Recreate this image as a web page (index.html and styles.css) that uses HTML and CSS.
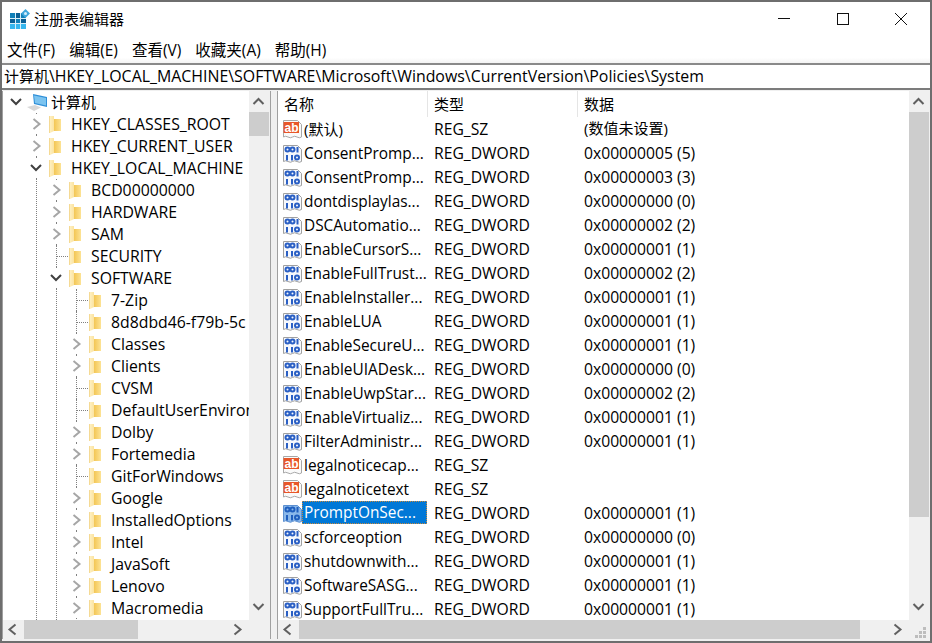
FILE: index.html
```html
<!DOCTYPE html>
<html>
	<head>
		<meta charset="UTF-8">
		<title>注册表编辑器</title>
		<link rel="stylesheet" href="styles.css">
	</head>
	<body>
		<svg class="defs" width="0" height="0">
			<defs>
				<linearGradient id="fld-back" x1="0" y1="0" x2="1" y2="0">
					<stop offset="0" stop-color="#f3c655"/>
					<stop offset="1" stop-color="#fde395"/>
				</linearGradient>
				<linearGradient id="fld-front" x1="0" y1="0" x2="1" y2="0">
					<stop offset="0" stop-color="#f0cf80"/>
					<stop offset=".3" stop-color="#feeebc"/>
					<stop offset="1" stop-color="#fbe3a0"/>
				</linearGradient>
			</defs>
			<symbol id="folder" viewBox="0 0 13 17">
				<path d="M5 3h7v12H5z" fill="url(#fld-back)"/>
				<path d="M0 0h5v15l-4 2H0z" fill="url(#fld-front)"/>
			</symbol>
			<symbol id="chev-r" viewBox="0 0 13 20"><path d="M3.500 5l6 5-6 5" fill="none" stroke="#a6a6a6" stroke-width="2"/></symbol>
			<symbol id="chev-d" viewBox="0 0 13 20"><path d="M1 7l5 5 5-5" fill="none" stroke="#404040" stroke-width="2"/></symbol>
			<symbol id="ico-sz" viewBox="0 0 20 20">
				<path d="M1.500 1.500h14l4 4v12.500q-2 1.500-4.500 0t-4.500 0-4.500 0-4.500 0z" fill="#fafafa" stroke="#a8a8a8"/>
				<rect x="1.500" y="3" width="15.500" height="11" fill="#e8572a"/>
				<text x="9.500" y="12.500" class="ab">ab</text>
			</symbol>
			<symbol id="ico-bin" viewBox="0 0 20 20">
				<path d="M1.500 2.500h14l4 4v12q-2 1.500-4.500 0t-4.500 0-4.500 0-4.500 0z" fill="#f6f8fc" stroke="#a0a0a0"/>
				<g fill="none" stroke="#2a5fc4" stroke-width="2">
					<circle cx="5.500" cy="6.500" r="2"/><circle cx="10.500" cy="6.500" r="2"/>
					<path d="M15.500 4v5.500M5 12v5.500M10 12v5.500"/><circle cx="15" cy="14.500" r="2"/>
				</g>
			</symbol>
			<symbol id="ico-bin-sel" viewBox="0 0 20 20">
				<path d="M1.500 2.500h14l4 4v12q-2 1.500-4.500 0t-4.500 0-4.500 0-4.500 0z" fill="#8ab8ea" stroke="#5d90d0"/>
				<g fill="none" stroke="#1f5fbe" stroke-width="2">
					<circle cx="5.500" cy="6.500" r="2"/><circle cx="10.500" cy="6.500" r="2"/>
					<path d="M15.500 4v5.500M5 12v5.500M10 12v5.500"/><circle cx="15" cy="14.500" r="2"/>
				</g>
			</symbol>
		</svg>

		<div class="window">
			<div class="titlebar">
				<svg class="app-icon" width="20" height="20" viewBox="0 0 20 20">
					<rect x="0" y="4" width="16" height="16" fill="#0f7fb8"/>
					<path d="M5.500 4h5v5h-5zM0 9.500h5.500v5H0zM10.500 9.500H16v5h-5.500z" fill="#0a5f94"/>
					<path d="M0 14.500h16V20H0z" fill="#35b6ee"/>
					<path d="M5.500 4v16M10.500 4v16M0 9.500h16M0 14.500h16" stroke="#d8eff9" stroke-width="1"/>
					<path d="M15.500 0l4.500 4.500-4.500 4.500-4.500-4.500z" fill="#3fa7dc"/>
					<circle cx="15.500" cy="4.500" r="1.500" fill="#d5eefa"/>
				</svg>
				<span class="title">注册表编辑器</span>
				<div class="win-btns">
					<svg width="12" height="12" viewBox="0 0 12 12"><path d="M0 5.500h12" stroke="#111"/></svg>
					<svg class="win-max" width="12" height="12" viewBox="0 0 12 12"><rect x=".5" y=".5" width="11" height="11" fill="none" stroke="#111"/></svg>
					<svg class="win-close" width="12" height="12" viewBox="0 0 12 12"><path d="M0 0l12 12M12 0L0 12" stroke="#111"/></svg>
				</div>
			</div>

			<div class="menubar">
				<span>文件(F)</span><span>编辑(E)</span><span>查看(V)</span><span>收藏夹(A)</span><span>帮助(H)</span>
			</div>

			<div class="address"><span class="cjk">计算机</span>\HKEY_LOCAL_MACHINE\SOFTWARE\Microsoft\Windows\CurrentVersion\Policies\System</div>

			<div class="panes">
				<div class="tree-pane">
					<div class="pane-body">
						<div class="tree">
							<i class="guide guide-1"></i>
							<i class="guide guide-2"></i>
							<div class="node computer">
								<svg class="exp"><use href="#chev-d"/></svg>
								<svg class="pc-icon" width="20" height="20" viewBox="0 0 20 20">
									<path d="M6 2l14 3v10L7 12z" fill="#2f8fd8"/>
									<path d="M7 3.500l12 2.500v7.500L8 11z" fill="#7cc4f0"/>
									<path d="M0 15l8-2 6 2.500-7 3.500z" fill="#d8d8d8"/>
								</svg>
								<span class="cjk">计算机</span>
							</div>
							<div class="node l1"><svg class="exp"><use href="#chev-r"/></svg><svg class="fld"><use href="#folder"/></svg><span>HKEY_CLASSES_ROOT</span></div>
							<div class="node l1"><svg class="exp"><use href="#chev-r"/></svg><svg class="fld"><use href="#folder"/></svg><span>HKEY_CURRENT_USER</span></div>
							<div class="node l1"><svg class="exp"><use href="#chev-d"/></svg><svg class="fld"><use href="#folder"/></svg><span>HKEY_LOCAL_MACHINE</span></div>
							<div class="node l2"><svg class="exp"><use href="#chev-r"/></svg><svg class="fld"><use href="#folder"/></svg><span>BCD00000000</span></div>
							<div class="node l2"><svg class="exp"><use href="#chev-r"/></svg><svg class="fld"><use href="#folder"/></svg><span>HARDWARE</span></div>
							<div class="node l2"><svg class="exp"><use href="#chev-r"/></svg><svg class="fld"><use href="#folder"/></svg><span>SAM</span></div>
							<div class="node l2"><i class="exp leaf"></i><svg class="fld"><use href="#folder"/></svg><span>SECURITY</span></div>
							<div class="node l2"><svg class="exp"><use href="#chev-d"/></svg><svg class="fld"><use href="#folder"/></svg><span>SOFTWARE</span></div>
							<div class="node l3"><i class="exp leaf"></i><svg class="fld"><use href="#folder"/></svg><span>7-Zip</span></div>
							<div class="node l3"><i class="exp leaf"></i><svg class="fld"><use href="#folder"/></svg><span>8d8dbd46-f79b-5c</span></div>
							<div class="node l3"><svg class="exp"><use href="#chev-r"/></svg><svg class="fld"><use href="#folder"/></svg><span>Classes</span></div>
							<div class="node l3"><svg class="exp"><use href="#chev-r"/></svg><svg class="fld"><use href="#folder"/></svg><span>Clients</span></div>
							<div class="node l3"><i class="exp leaf"></i><svg class="fld"><use href="#folder"/></svg><span>CVSM</span></div>
							<div class="node l3"><i class="exp leaf"></i><svg class="fld"><use href="#folder"/></svg><span>DefaultUserEnviron</span></div>
							<div class="node l3"><svg class="exp"><use href="#chev-r"/></svg><svg class="fld"><use href="#folder"/></svg><span>Dolby</span></div>
							<div class="node l3"><svg class="exp"><use href="#chev-r"/></svg><svg class="fld"><use href="#folder"/></svg><span>Fortemedia</span></div>
							<div class="node l3"><i class="exp leaf"></i><svg class="fld"><use href="#folder"/></svg><span>GitForWindows</span></div>
							<div class="node l3"><svg class="exp"><use href="#chev-r"/></svg><svg class="fld"><use href="#folder"/></svg><span>Google</span></div>
							<div class="node l3"><svg class="exp"><use href="#chev-r"/></svg><svg class="fld"><use href="#folder"/></svg><span>InstalledOptions</span></div>
							<div class="node l3"><svg class="exp"><use href="#chev-r"/></svg><svg class="fld"><use href="#folder"/></svg><span>Intel</span></div>
							<div class="node l3"><svg class="exp"><use href="#chev-r"/></svg><svg class="fld"><use href="#folder"/></svg><span>JavaSoft</span></div>
							<div class="node l3"><svg class="exp"><use href="#chev-r"/></svg><svg class="fld"><use href="#folder"/></svg><span>Lenovo</span></div>
							<div class="node l3"><svg class="exp"><use href="#chev-r"/></svg><svg class="fld"><use href="#folder"/></svg><span>Macromedia</span></div>
						</div>
						<div class="vbar">
							<svg class="arrow-v" viewBox="0 0 20 21"><path d="M4.500 13l5-5 5 5" fill="none" stroke="#606060" stroke-width="2"/></svg>
							<div class="thumb tree-vthumb"></div>
							<div class="track"></div>
							<svg class="arrow-v" viewBox="0 0 20 21"><path d="M4.500 5l5 5 5-5" fill="none" stroke="#606060" stroke-width="2"/></svg>
						</div>
					</div>
					<div class="hbar">
						<svg class="arrow-h" viewBox="0 0 21 19"><path d="M12.500 4.500l-6 5 6 5" fill="none" stroke="#606060" stroke-width="2"/></svg>
						<div class="thumb tree-hthumb"></div>
						<div class="track"></div>
						<svg class="arrow-h" viewBox="0 0 21 19"><path d="M6.500 4.500l6 5-6 5" fill="none" stroke="#606060" stroke-width="2"/></svg>
						<div class="corner"></div>
					</div>
				</div>

				<div class="list-pane">
					<div class="pane-body">
						<div class="list">
							<div class="head"><span class="h-name">名称</span><span class="h-type">类型</span><span class="h-data">数据</span></div>
							<div class="row"><svg class="ico"><use href="#ico-sz"/></svg><span class="c-name cjk">(默认)</span><span class="c-type">REG_SZ</span><span class="c-data cjk">(数值未设置)</span></div>
							<div class="row"><svg class="ico"><use href="#ico-bin"/></svg><span class="c-name">ConsentPromp...</span><span class="c-type">REG_DWORD</span><span class="c-data">0x00000005 (5)</span></div>
							<div class="row"><svg class="ico"><use href="#ico-bin"/></svg><span class="c-name">ConsentPromp...</span><span class="c-type">REG_DWORD</span><span class="c-data">0x00000003 (3)</span></div>
							<div class="row"><svg class="ico"><use href="#ico-bin"/></svg><span class="c-name">dontdisplaylas...</span><span class="c-type">REG_DWORD</span><span class="c-data">0x00000000 (0)</span></div>
							<div class="row"><svg class="ico"><use href="#ico-bin"/></svg><span class="c-name">DSCAutomatio...</span><span class="c-type">REG_DWORD</span><span class="c-data">0x00000002 (2)</span></div>
							<div class="row"><svg class="ico"><use href="#ico-bin"/></svg><span class="c-name">EnableCursorS...</span><span class="c-type">REG_DWORD</span><span class="c-data">0x00000001 (1)</span></div>
							<div class="row"><svg class="ico"><use href="#ico-bin"/></svg><span class="c-name">EnableFullTrust...</span><span class="c-type">REG_DWORD</span><span class="c-data">0x00000002 (2)</span></div>
							<div class="row"><svg class="ico"><use href="#ico-bin"/></svg><span class="c-name">EnableInstaller...</span><span class="c-type">REG_DWORD</span><span class="c-data">0x00000001 (1)</span></div>
							<div class="row"><svg class="ico"><use href="#ico-bin"/></svg><span class="c-name">EnableLUA</span><span class="c-type">REG_DWORD</span><span class="c-data">0x00000001 (1)</span></div>
							<div class="row"><svg class="ico"><use href="#ico-bin"/></svg><span class="c-name">EnableSecureU...</span><span class="c-type">REG_DWORD</span><span class="c-data">0x00000001 (1)</span></div>
							<div class="row"><svg class="ico"><use href="#ico-bin"/></svg><span class="c-name">EnableUIADesk...</span><span class="c-type">REG_DWORD</span><span class="c-data">0x00000000 (0)</span></div>
							<div class="row"><svg class="ico"><use href="#ico-bin"/></svg><span class="c-name">EnableUwpStar...</span><span class="c-type">REG_DWORD</span><span class="c-data">0x00000002 (2)</span></div>
							<div class="row"><svg class="ico"><use href="#ico-bin"/></svg><span class="c-name">EnableVirtualiz...</span><span class="c-type">REG_DWORD</span><span class="c-data">0x00000001 (1)</span></div>
							<div class="row"><svg class="ico"><use href="#ico-bin"/></svg><span class="c-name">FilterAdministr...</span><span class="c-type">REG_DWORD</span><span class="c-data">0x00000001 (1)</span></div>
							<div class="row"><svg class="ico"><use href="#ico-sz"/></svg><span class="c-name">legalnoticecap...</span><span class="c-type">REG_SZ</span><span class="c-data"></span></div>
							<div class="row"><svg class="ico"><use href="#ico-sz"/></svg><span class="c-name">legalnoticetext</span><span class="c-type">REG_SZ</span><span class="c-data"></span></div>
							<div class="row selected"><svg class="ico"><use href="#ico-bin-sel"/></svg><span class="c-name">PromptOnSec...</span><span class="c-type">REG_DWORD</span><span class="c-data">0x00000001 (1)</span></div>
							<div class="row"><svg class="ico"><use href="#ico-bin"/></svg><span class="c-name">scforceoption</span><span class="c-type">REG_DWORD</span><span class="c-data">0x00000000 (0)</span></div>
							<div class="row"><svg class="ico"><use href="#ico-bin"/></svg><span class="c-name">shutdownwith...</span><span class="c-type">REG_DWORD</span><span class="c-data">0x00000001 (1)</span></div>
							<div class="row"><svg class="ico"><use href="#ico-bin"/></svg><span class="c-name">SoftwareSASG...</span><span class="c-type">REG_DWORD</span><span class="c-data">0x00000001 (1)</span></div>
							<div class="row"><svg class="ico"><use href="#ico-bin"/></svg><span class="c-name">SupportFullTru...</span><span class="c-type">REG_DWORD</span><span class="c-data">0x00000001 (1)</span></div>
						</div>
						<div class="vbar">
							<svg class="arrow-v" viewBox="0 0 20 21"><path d="M4.500 13l5-5 5 5" fill="none" stroke="#606060" stroke-width="2"/></svg>
							<div class="thumb list-vthumb"></div>
							<div class="track"></div>
							<svg class="arrow-v" viewBox="0 0 20 21"><path d="M4.500 5l5 5 5-5" fill="none" stroke="#606060" stroke-width="2"/></svg>
						</div>
					</div>
					<div class="hbar">
						<svg class="arrow-h" viewBox="0 0 21 19"><path d="M12.500 4.500l-6 5 6 5" fill="none" stroke="#606060" stroke-width="2"/></svg>
						<div class="thumb list-hthumb"></div>
						<div class="track"></div>
						<svg class="arrow-h" viewBox="0 0 21 19"><path d="M6.500 4.500l6 5-6 5" fill="none" stroke="#606060" stroke-width="2"/></svg>
						<svg class="corner" viewBox="0 0 21 19"><path d="M14 7h3v3h-3zM10 11h3v3h-3zM14 11h3v3h-3zM6 15h3v3H6zM10 15h3v3h-3zM14 15h3v3h-3z" fill="#bdbdbd"/></svg>
					</div>
				</div>
			</div>
		</div>
	</body>
</html>
```

FILE: styles.css
```css
* {
	margin: 0;
	padding: 0;
	box-sizing: border-box;
}

html, body {
	width: 932px;
	height: 643px;
	overflow: hidden;
}

body {
	font-family: "Open Sans", "Noto Sans CJK SC", sans-serif;
	font-size: 15.8px;
	color: #000;
	background: #fff;
}

.defs {
	position: absolute;
}

.cjk {
	font-size: 15px;
}

.ab {
	font-family: "Liberation Sans", sans-serif;
	font-size: 12px;
	font-weight: bold;
	fill: #fff;
	text-anchor: middle;
}

.window {
	width: 932px;
	height: 643px;
	border: 2px solid #6e6e6e;
	display: flex;
	flex-direction: column;
	background: #f0f0f0;
}

.titlebar {
	height: 34px;
	flex: none;
	background: #fff;
	display: flex;
	align-items: center;
	padding-left: 8px;
}

.app-icon {
	margin-right: 4px;
}

.title {
	font-size: 15px;
	flex: 1;
	margin-bottom: 2px;
}

.win-btns {
	display: flex;
	align-items: center;
	padding-right: 23px;
}

.win-max {
	margin-left: 47px;
}

.win-close {
	margin-left: 46px;
}

.menubar {
	height: 27px;
	flex: none;
	background: linear-gradient(#fff 0, #fff 80%, #f4f4f4 100%);
	display: flex;
	gap: 14px;
	align-items: center;
	padding-left: 5px;
	font-size: 15.5px;
}

.address {
	height: 27px;
	flex: none;
	background: #fff;
	border-top: 2px solid #8a8a8a;
	border-bottom: 2px solid #7c7c7c;
	line-height: 23px;
	padding-left: 2px;
	white-space: nowrap;
	overflow: hidden;
	font-size: 15.9px;
}

.panes {
	flex: 1;
	min-height: 0;
	display: flex;
	gap: 6px;
	padding: 1px 0 2px;
	background: #f0f0f0;
}

.tree-pane {
	width: 269px;
	flex: none;
	display: flex;
	flex-direction: column;
	border-left: 1px solid #a0a0a0;
	border-right: 1px solid #a0a0a0;
}

.list-pane {
	flex: 1;
	min-width: 0;
	display: flex;
	flex-direction: column;
	border-left: 1px solid #a0a0a0;
}

.pane-body {
	flex: 1;
	min-height: 0;
	display: flex;
}

.tree, .list {
	flex: 1;
	min-width: 0;
	background: #fff;
	overflow: hidden;
	position: relative;
}

.node {
	height: 22px;
	display: flex;
	align-items: center;
	white-space: nowrap;
	position: relative;
}

.exp {
	width: 13px;
	height: 20px;
	flex: none;
	margin-right: 6px;
	position: relative;
	z-index: 1;
}

svg.exp {
	background: #fff;
}

.fld {
	width: 13px;
	height: 17px;
	flex: none;
	margin-right: 9px;
}

.computer {
	padding-left: 7px;
}

.computer .exp {
	margin-right: 4px;
}

.computer .cjk {
	margin-bottom: 2px;
}

.pc-icon {
	flex: none;
	margin-right: 4px;
}

.l1 {
	padding-left: 27px;
}

.l2 {
	padding-left: 47px;
}

.l3 {
	padding-left: 67px;
}

/* 树的虚线 */
.guide {
	position: absolute;
	bottom: 0;
	border-left: 1px dotted #808080;
}

.guide-1 {
	left: 33px;
	top: 84px;
}

.guide-2 {
	left: 53px;
	top: 197px;
}

.node::before {
	content: "";
	position: absolute;
	top: 0;
	bottom: 0;
	border-left: 1px dotted #808080;
}

.computer::before {
	display: none;
}

.l1::before {
	left: 33px;
}

.l2::before {
	left: 53px;
}

.l3::before {
	left: 73px;
}

.leaf::after {
	content: "";
	position: absolute;
	left: 7px;
	top: 10px;
	width: 11px;
	border-top: 1px dotted #808080;
}

.vbar {
	width: 21px;
	flex: none;
	display: flex;
	flex-direction: column;
	background: #f0f0f0;
}

.hbar {
	height: 19px;
	flex: none;
	display: flex;
	background: #f0f0f0;
}

.arrow-v {
	width: 20px;
	height: 21px;
	flex: none;
}

.arrow-h {
	width: 21px;
	height: 19px;
	flex: none;
}

.corner {
	width: 21px;
	height: 19px;
	flex: none;
}

.thumb {
	background: #cdcdcd;
	flex: none;
}

.track {
	flex: 1;
}

.vbar .thumb {
	width: 20px;
}

.tree-vthumb {
	height: 24px;
}

.tree-hthumb {
	width: 114px;
}

.list-vthumb {
	height: 405px;
}

.list-hthumb {
	width: 561px;
}

.head {
	height: 26px;
	display: flex;
	font-size: 15px;
	line-height: 26px;
}

.h-name {
	width: 149px;
	padding-left: 6px;
}

.h-type {
	width: 150px;
	padding-left: 6px;
	border-left: 1px solid #e5e5e5;
}

.h-data {
	flex: 1;
	padding-left: 6px;
	border-left: 1px solid #e5e5e5;
}

.row {
	height: 24px;
	display: flex;
	align-items: center;
	padding-left: 4px;
	white-space: nowrap;
	font-size: 15.7px;
}

.ico {
	width: 20px;
	height: 20px;
	flex: none;
}

.c-name {
	width: 125px;
	flex: none;
	padding-left: 2px;
	overflow: hidden;
	font-size: 15.4px;
}

.c-name.cjk {
	font-size: 15px;
	margin-bottom: 2px;
}

.c-data.cjk {
	font-size: 15px;
	margin-bottom: 3px;
}

.c-type {
	width: 150px;
	flex: none;
	padding-left: 7px;
}

.c-data {
	flex: 1;
	padding-left: 7px;
}

.selected .c-name {
	align-self: flex-start;
	height: 23px;
	line-height: 23px;
	background: #0078d7;
	color: #fff;
	outline: 1px dotted #c98a3c;
	outline-offset: -1px;
}
```
